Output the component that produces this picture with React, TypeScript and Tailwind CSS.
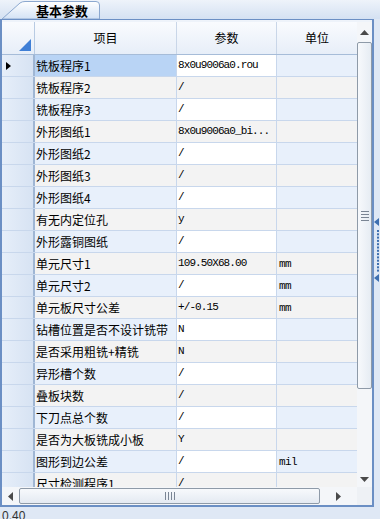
import React from 'react';

const rows: { item: string; value: string; unit: string }[] = [
  { item: '铣板程序1', value: '8x0u9006a0.rou', unit: '' },
  { item: '铣板程序2', value: '/', unit: '' },
  { item: '铣板程序3', value: '/', unit: '' },
  { item: '外形图纸1', value: '8x0u9006a0_bi...', unit: '' },
  { item: '外形图纸2', value: '/', unit: '' },
  { item: '外形图纸3', value: '/', unit: '' },
  { item: '外形图纸4', value: '/', unit: '' },
  { item: '有无内定位孔', value: 'y', unit: '' },
  { item: '外形露铜图纸', value: '/', unit: '' },
  { item: '单元尺寸1', value: '109.50X68.00', unit: 'mm' },
  { item: '单元尺寸2', value: '/', unit: 'mm' },
  { item: '单元板尺寸公差', value: '+/-0.15', unit: 'mm' },
  { item: '钻槽位置是否不设计铣带', value: 'N', unit: '' },
  { item: '是否采用粗铣+精铣', value: 'N', unit: '' },
  { item: '异形槽个数', value: '/', unit: '' },
  { item: '叠板块数', value: '/', unit: '' },
  { item: '下刀点总个数', value: '/', unit: '' },
  { item: '是否为大板铣成小板', value: 'Y', unit: '' },
  { item: '图形到边公差', value: '/', unit: 'mil' },
  { item: '尺寸检测程序1', value: '/', unit: '' },
];

const cjk = "font-['SimSun','Noto_Sans_CJK_SC',sans-serif]";
const mono = "font-['Liberation_Mono','Noto_Sans_CJK_SC',monospace]";

const App: React.FC = () => {
  return (
    <div className={`flex h-[519px] w-[380px] flex-col overflow-hidden bg-[#dfe8f5] text-black ${cjk}`}>
      {/* Tab strip */}
      <div className="relative h-[19px] shrink-0 bg-gradient-to-b from-[#eef3fa] to-[#d4e1f2]">
        <div className="absolute bottom-0 left-[2px] flex h-[18px] w-[98px] items-center">
          <svg className="absolute inset-0" width="98" height="18" viewBox="0 0 98 18">
            <defs>
              <linearGradient id="tabg" x1="0" y1="0" x2="0" y2="1">
                <stop offset="0" stopColor="#ffffff" />
                <stop offset="1" stopColor="#d3e2f5" />
              </linearGradient>
            </defs>
            <path d="M0 18 L18 2 Q20 0.5 23 0.5 L94 0.5 Q97.5 0.5 97.5 4 L97.5 18 Z" fill="url(#tabg)" stroke="#8ca8cf" />
          </svg>
          <span className="relative ml-[34px] text-[13px] font-bold leading-none">基本参数</span>
        </div>
      </div>

      <div className="flex min-h-0 flex-1">
        {/* Grid panel */}
        <div className="flex w-[374px] flex-col border-x-2 border-t border-b-2 border-[#6b8fc4] bg-[#eef3fa]">
          <div className="flex min-h-0 flex-1 pt-[2px]">
            {/* table */}
            <div className="flex min-w-0 flex-1 flex-col overflow-hidden bg-white">
              {/* header */}
              <div className="flex h-[33px] shrink-0 border-b border-[#a6bcd8] bg-gradient-to-b from-[#f9fbfe] to-[#e7eef8] text-[12px]">
                <div className="relative w-[33px] shrink-0 border-r border-[#b8cbe3]">
                  <svg className="absolute bottom-[3px] right-[3px]" width="12" height="12" viewBox="0 0 12 12">
                    <path d="M12 0 L12 12 L0 12 Z" fill="#3f7fd6" />
                  </svg>
                </div>
                <div className="flex w-[142px] shrink-0 items-center justify-center border-r border-[#c9d6e8]">项目</div>
                <div className="flex w-[100px] shrink-0 items-center justify-center border-r border-[#c9d6e8]">参数</div>
                <div className="flex flex-1 items-center justify-center">单位</div>
              </div>
              {/* body */}
              <div className="min-h-0 flex-1 overflow-hidden">
                {rows.map((r, i) => {
                  const odd = i % 2 === 0;
                  const rowBg = odd ? 'bg-[#e8f0fb]' : 'bg-[#f3f3f3]';
                  return (
                    <div key={i} className="flex h-[22px] border-b border-[#c8d7ec]">
                      <div className="relative flex w-[33px] shrink-0 items-center border-r-2 border-[#9fb6d4] bg-gradient-to-r from-[#e6eef9] to-[#d7e3f3]">
                        {i === 0 && (
                          <svg className="absolute left-[4px]" width="5" height="8" viewBox="0 0 5 8">
                            <path d="M0 0 L5 4 L0 8 Z" fill="#000" />
                          </svg>
                        )}
                      </div>
                      <div
                        className={`flex w-[142px] shrink-0 items-center overflow-hidden whitespace-nowrap border-r border-[#c8d7ec] pl-[1px] text-[12px] ${
                          i === 0 ? 'bg-[#b9d4f5]' : rowBg
                        }`}
                      >
                        {r.item}
                      </div>
                      <div
                        className={`flex w-[100px] shrink-0 items-center overflow-hidden whitespace-nowrap border-r border-[#c8d7ec] pl-[1px] text-[11px] tracking-[-0.9px] text-black ${mono} ${
                          odd ? 'bg-white' : 'bg-[#f3f3f3]'
                        }`}
                      >
                        {r.value}
                      </div>
                      <div className={`flex flex-1 items-center pl-[2px] pt-[2px] text-[11px] tracking-[-0.6px] text-black ${mono} ${rowBg}`}>
                        {r.unit}
                      </div>
                    </div>
                  );
                })}
              </div>
            </div>
            {/* vertical scrollbar */}
            <div className="flex w-[15px] shrink-0 flex-col bg-[#f4f6f9]">
              <div className="flex h-[20px] items-center justify-center">
                <svg width="9" height="5" viewBox="0 0 9 5"><path d="M0 5 L4.5 0 L9 5 Z" fill="#4a4a4a" /></svg>
              </div>
              <div className="flex h-[347px] items-center justify-center rounded-[2px] border border-[#8e9aa8] bg-gradient-to-r from-[#f7f9fc] to-[#e6ecf3]">
                <div className="flex flex-col gap-[2px]">
                  <div className="h-px w-[8px] bg-[#7a8594]" />
                  <div className="h-px w-[8px] bg-[#7a8594]" />
                  <div className="h-px w-[8px] bg-[#7a8594]" />
                  <div className="h-px w-[8px] bg-[#7a8594]" />
                </div>
              </div>
              <div className="flex-1" />
              <div className="flex h-[16px] items-center justify-center">
                <svg width="9" height="5" viewBox="0 0 9 5"><path d="M0 0 L4.5 5 L9 0 Z" fill="#4a4a4a" /></svg>
              </div>
            </div>
          </div>
          {/* horizontal scrollbar */}
          <div className="flex h-[18px] shrink-0 bg-[#f4f6f9]">
            <div className="flex w-[17px] items-center justify-center">
              <svg width="5" height="9" viewBox="0 0 5 9"><path d="M5 0 L0 4.5 L5 9 Z" fill="#4a4a4a" /></svg>
            </div>
            <div className="my-[1px] flex w-[301px] items-center justify-center rounded-[2px] border border-[#8e9aa8] bg-gradient-to-b from-[#f7f9fc] to-[#e4eaf2]">
              <div className="flex gap-[2px]">
                <div className="h-[8px] w-px bg-[#7a8594]" />
                <div className="h-[8px] w-px bg-[#7a8594]" />
                <div className="h-[8px] w-px bg-[#7a8594]" />
                <div className="h-[8px] w-px bg-[#7a8594]" />
              </div>
            </div>
            <div className="flex flex-1 items-center justify-center">
              <svg width="5" height="9" viewBox="0 0 5 9"><path d="M0 0 L5 4.5 L0 9 Z" fill="#4a4a4a" /></svg>
            </div>
            <div className="w-[15px] bg-[#eef1f5]" />
          </div>
        </div>

        {/* splitter */}
        <div className="relative w-[6px] shrink-0 bg-[#dfe8f5]">
          <svg className="absolute left-0 top-[199px]" width="6" height="64" viewBox="0 0 6 64">
            <path d="M0 4 L5 0 L5 8 Z" fill="#3e6fb0" />
            {Array.from({ length: 13 }).map((_, k) => (
              <rect key={k} x="3" y={12 + k * 3.3} width="2" height="2" fill="#3e6fb0" />
            ))}
            <path d="M0 60 L5 56 L5 64 Z" fill="#3e6fb0" />
          </svg>
        </div>
      </div>

      {/* status */}
      <div className="h-[12px] shrink-0 pl-[2px] text-[12px] leading-[18px] text-[#333] font-['Liberation_Sans',sans-serif]">0.40</div>
    </div>
  );
};

export default App;
